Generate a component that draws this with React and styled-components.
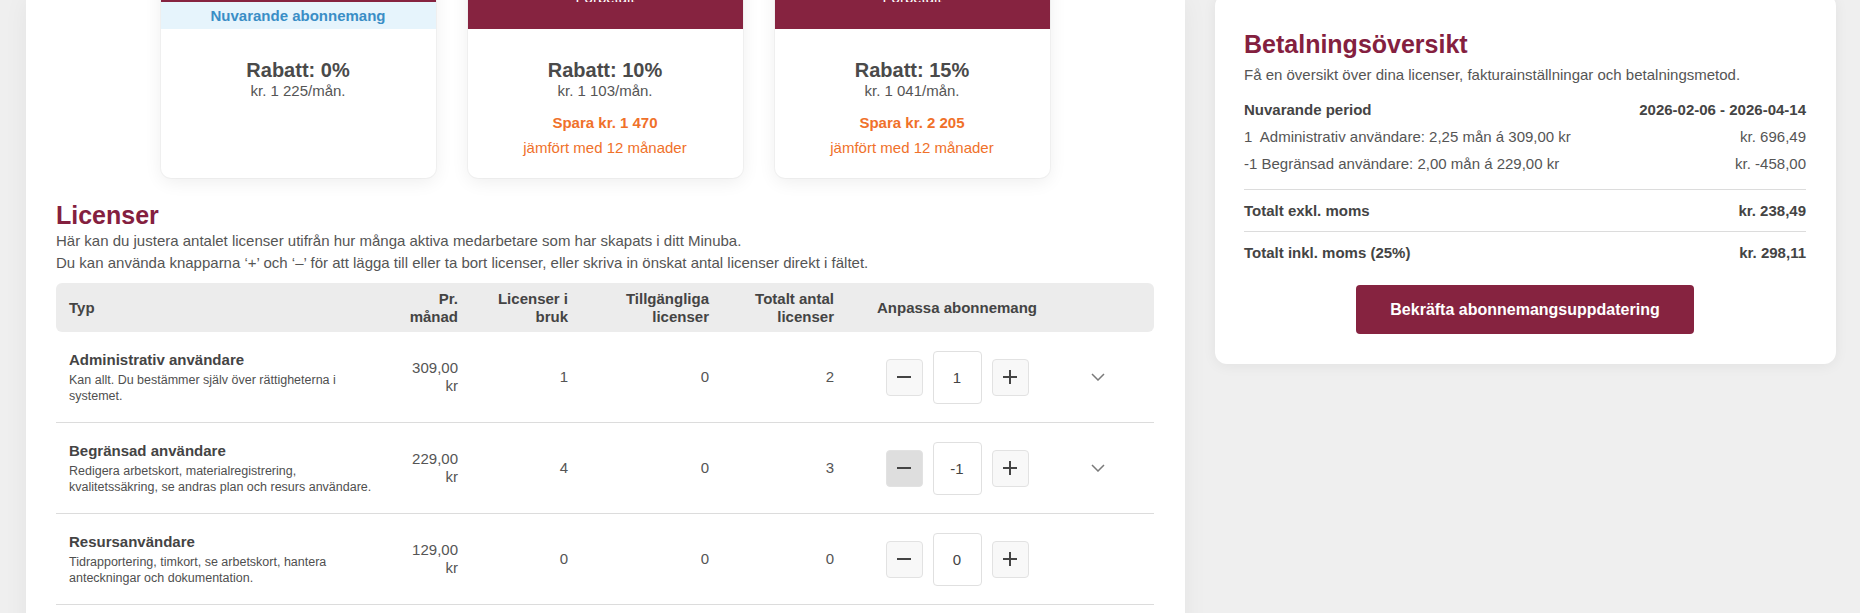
import React from 'react';
import styled, { createGlobalStyle } from 'styled-components';

const GlobalStyle = createGlobalStyle`
  html, body {
    margin: 0;
    padding: 0;
  }
  body {
    background: #efefef;
    font-family: "Liberation Sans", Arial, sans-serif;
    font-size: 15px;
    color: #555;
    overflow: hidden;
  }
`;

const Page = styled.div`
  display: flex;
  align-items: flex-start;
  gap: 30px;
  padding: 0 24px 0 26px;
`;

const Main = styled.main`
  flex: none;
  width: 1159px;
  min-height: 100vh;
  box-sizing: border-box;
  padding: 0 31px 40px 30px;
  background: #fff;
  box-shadow: 0 0 24px rgba(0, 0, 0, 0.05);
`;

const Side = styled.aside`
  flex: none;
  width: 621px;
`;

/* plan cards */

const CardRow = styled.div`
  display: flex;
  justify-content: center;
  gap: 32px;
  margin-top: -50px;
`;

const PlanCard = styled.div`
  width: 275px;
  display: flex;
  flex-direction: column;
  background: #fff;
  border-radius: 10px;
  overflow: hidden;
  box-shadow: 0 4px 18px rgba(0, 0, 0, 0.07), 0 0 0 1px rgba(0, 0, 0, 0.03);
`;

const CardHead = styled.div`
  padding: 14px 12px 0;
  background: #862340;
  color: #fff;
  text-align: center;
`;

const CardTitle = styled.div`
  font-size: 18px;
  font-weight: 700;
  line-height: 22px;
`;

const CardSub = styled.div`
  margin: 4px 0 -3px;
  font-size: 15px;
  line-height: 15px;
`;

const Slot = styled.div`
  height: 27px;
  display: flex;
  align-items: center;
  justify-content: center;
  font-weight: 700;
  background: ${p => (p.$current ? '#e6f4fc' : '#862340')};
  color: #3a8ec6;
`;

const CardBody = styled.div`
  flex: 1;
  padding: 29px 12px 21px;
  text-align: center;
`;

const Discount = styled.div`
  font-size: 20px;
  font-weight: 700;
  line-height: 24px;
  color: #4a4a4a;
`;

const MonthPrice = styled.div`
  line-height: 18px;
  color: #555;
`;

const Save = styled.div`
  margin-top: 14px;
  line-height: 18px;
  font-weight: 700;
  color: #f0712a;
`;

const Compare = styled.div`
  margin-top: 7px;
  line-height: 18px;
  color: #f0712a;
`;

/* licenses */

const Heading = styled.h2`
  margin: ${p => p.$top || 0} 0 0;
  font-size: 25px;
  font-weight: 700;
  line-height: 30px;
  color: #84203f;
`;

const Intro = styled.p`
  margin: 0;
  line-height: 22px;
`;

const Table = styled.div`
  margin-top: 9px;
`;

const cols = '340px 74px 110px 141px 125px 222px 1fr';

const HeadRow = styled.div`
  display: grid;
  grid-template-columns: ${cols};
  align-items: center;
  min-height: 49px;
  background: #ececec;
  border-radius: 6px;
  font-weight: 700;
  line-height: 19px;
  color: #444;
`;

const Row = styled.div`
  display: grid;
  grid-template-columns: ${cols};
  align-items: center;
  padding: 18.5px 0;
  border-bottom: 1px solid #dcdcdc;
`;

const Cell = styled.div`
  padding: 0 12px 0 ${p => (p.$first ? '13px' : '12px')};
  text-align: ${p => p.$align || 'left'};
  line-height: 18px;
`;

const Name = styled.div`
  font-weight: 700;
  line-height: 18px;
  color: #444;
`;

const Desc = styled.div`
  max-width: 312px;
  margin-top: 3px;
  font-size: 12.5px;
  line-height: 16px;
  color: #4f4f4f;
`;

const Stepper = styled.div`
  display: flex;
  align-items: center;
  justify-content: center;
  gap: 10px;
`;

const StepButton = styled.button`
  width: 37px;
  height: 37px;
  padding: 0;
  display: grid;
  place-items: center;
  border: 1px solid #e2e2e2;
  border-radius: 4px;
  background: ${p => (p.$pressed ? '#dedede' : '#f8f8f8')};
  cursor: pointer;
`;

const Qty = styled.input`
  width: 49px;
  height: 53px;
  box-sizing: border-box;
  border: 1px solid #e0e0e0;
  border-radius: 4px;
  text-align: center;
  font: 15px "Liberation Sans", Arial, sans-serif;
  color: #444;
  outline: none;
`;

const Toggle = styled.div`
  padding-left: 23px;
  display: flex;
  align-items: center;
`;

/* summary */

const SummaryCard = styled.section`
  margin-top: -6px;
  padding: 35px 30px 30px 29px;
  background: #fff;
  border-radius: 12px;
  box-shadow: 0 2px 14px rgba(0, 0, 0, 0.06);
`;

const Lead = styled.p`
  margin: 6px 0 0;
  line-height: 20px;
`;

const Lines = styled.div`
  margin: 11px 0 12px;
`;

const Line = styled.div`
  display: flex;
  justify-content: space-between;
  padding: 4px 0;
  line-height: 19px;
  font-weight: ${p => (p.$strong ? 700 : 400)};
  color: ${p => (p.$strong ? '#444' : '#555')};
  white-space: pre;
`;

const Total = styled.div`
  display: flex;
  justify-content: space-between;
  padding: 10px 0;
  border-top: 1px solid #dcdcdc;
  line-height: 21px;
  font-weight: 700;
  color: #444;
`;

const Confirm = styled.button`
  display: block;
  height: 49px;
  margin: 12px auto 0;
  padding: 0 34px;
  border: none;
  border-radius: 4px;
  background: #862340;
  color: #fff;
  font: 700 16px "Liberation Sans", Arial, sans-serif;
  cursor: pointer;
`;

const Minus = () => (
  <svg width="14" height="14" viewBox="0 0 14 14">
    <line x1="0" y1="7" x2="14" y2="7" stroke="#444" strokeWidth="2" />
  </svg>
);

const Plus = () => (
  <svg width="14" height="14" viewBox="0 0 14 14">
    <line x1="0" y1="7" x2="14" y2="7" stroke="#444" strokeWidth="2" />
    <line x1="7" y1="0" x2="7" y2="14" stroke="#444" strokeWidth="2" />
  </svg>
);

const Chevron = () => (
  <svg width="14" height="8" viewBox="0 0 14 8">
    <polyline points="1,1 7,7 13,1" fill="none" stroke="#7a7a7a" strokeWidth="1.5" />
  </svg>
);

const plans = [
  { title: 'Månadsvis', sub: '\u00a0', current: true, discount: '0%', price: 'kr. 1 225/mån.' },
  { title: 'Årsvis', sub: 'Förbetalt', discount: '10%', price: 'kr. 1 103/mån.', save: 'Spara kr. 1 470' },
  { title: 'Årsvis', sub: 'Förbetalt', discount: '15%', price: 'kr. 1 041/mån.', save: 'Spara kr. 2 205' },
];

const licenses = [
  {
    name: 'Administrativ användare',
    desc: 'Kan allt. Du bestämmer själv över rättigheterna i systemet.',
    price: '309,00 kr', inUse: 1, free: 0, total: 2, qty: '1', open: true,
  },
  {
    name: 'Begränsad användare',
    desc: 'Redigera arbetskort, materialregistrering, kvalitetssäkring, se andras plan och resurs användare.',
    price: '229,00 kr', inUse: 4, free: 0, total: 3, qty: '-1', open: true, pressed: true,
  },
  {
    name: 'Resursanvändare',
    desc: 'Tidrapportering, timkort, se arbetskort, hantera anteckningar och dokumentation.',
    price: '129,00 kr', inUse: 0, free: 0, total: 0, qty: '0',
  },
];

export default function App() {
  return (
    <>
      <GlobalStyle />
      <Page>
        <Main>
          <CardRow>
            {plans.map((p, i) => (
              <PlanCard key={i}>
                <CardHead>
                  <CardTitle>{p.title}</CardTitle>
                  <CardSub>{p.sub}</CardSub>
                </CardHead>
                <Slot $current={p.current}>{p.current ? 'Nuvarande abonnemang' : null}</Slot>
                <CardBody>
                  <Discount>Rabatt: {p.discount}</Discount>
                  <MonthPrice>{p.price}</MonthPrice>
                  {p.save && <Save>{p.save}</Save>}
                  {p.save && <Compare>jämfört med 12 månader</Compare>}
                </CardBody>
              </PlanCard>
            ))}
          </CardRow>

          <Heading $top="22px">Licenser</Heading>
          <Intro>Här kan du justera antalet licenser utifrån hur många aktiva medarbetare som har skapats i ditt Minuba.</Intro>
          <Intro>Du kan använda knapparna ‘+’ och ‘–’ för att lägga till eller ta bort licenser, eller skriva in önskat antal licenser direkt i fältet.</Intro>

          <Table>
            <HeadRow>
              <Cell $first>Typ</Cell>
              <Cell $align="right">Pr. månad</Cell>
              <Cell $align="right">Licenser i bruk</Cell>
              <Cell $align="right">Tillgängliga licenser</Cell>
              <Cell $align="right">Totalt antal licenser</Cell>
              <Cell $align="center">Anpassa abonnemang</Cell>
              <Cell />
            </HeadRow>
            {licenses.map(l => (
              <Row key={l.name}>
                <Cell $first>
                  <Name>{l.name}</Name>
                  <Desc>{l.desc}</Desc>
                </Cell>
                <Cell $align="right">{l.price}</Cell>
                <Cell $align="right">{l.inUse}</Cell>
                <Cell $align="right">{l.free}</Cell>
                <Cell $align="right">{l.total}</Cell>
                <Stepper>
                  <StepButton $pressed={l.pressed} aria-label="Minska"><Minus /></StepButton>
                  <Qty defaultValue={l.qty} />
                  <StepButton aria-label="Öka"><Plus /></StepButton>
                </Stepper>
                <Toggle>{l.open && <Chevron />}</Toggle>
              </Row>
            ))}
          </Table>
        </Main>

        <Side>
          <SummaryCard>
            <Heading>Betalningsöversikt</Heading>
            <Lead>Få en översikt över dina licenser, fakturainställningar och betalningsmetod.</Lead>
            <Lines>
              <Line $strong><span>Nuvarande period</span><span>2026-02-06 - 2026-04-14</span></Line>
              <Line><span>{'1  Administrativ användare: 2,25 mån á 309,00 kr'}</span><span>kr. 696,49</span></Line>
              <Line><span>-1 Begränsad användare: 2,00 mån á 229,00 kr</span><span>kr. -458,00</span></Line>
            </Lines>
            <Total><span>Totalt exkl. moms</span><span>kr. 238,49</span></Total>
            <Total><span>Totalt inkl. moms (25%)</span><span>kr. 298,11</span></Total>
            <Confirm>Bekräfta abonnemangsuppdatering</Confirm>
          </SummaryCard>
        </Side>
      </Page>
    </>
  );
}
